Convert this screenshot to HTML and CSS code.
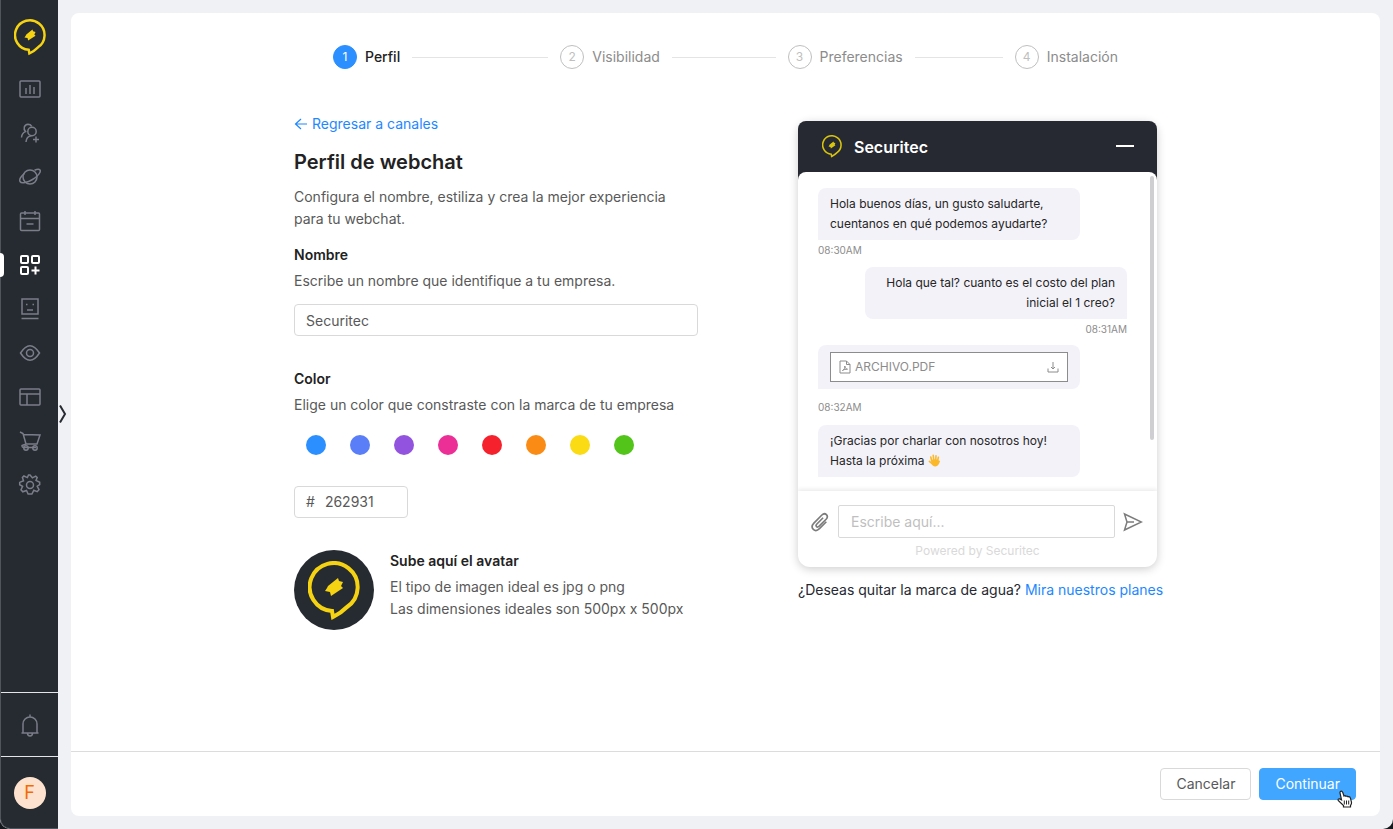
FILE: index.html
```html
<!DOCTYPE html>
<html lang="es">
<head>
<meta charset="utf-8">
<meta name="viewport" content="width=device-width, initial-scale=1">
<title>Perfil de webchat</title>
<link rel="stylesheet" href="styles.css">
</head>
<body>
<svg class="sprite" aria-hidden="true">
  <symbol id="logo" viewBox="-26 -26 52 60">
    <path d="M-2 24A24 24 0 1 1 13 20Q7 26 -1 30Z" fill="none" stroke="currentColor" stroke-width="4"/>
    <path d="M4 -9L5 -6L9 -5L7 -1L9 1L-3 9L-4 5L-9 4L-7 1L-6 -1Z" fill="currentColor"/>
  </symbol>
</svg>
<div class="app">
  <aside class="sidebar">
    <a class="brand" href="#" aria-label="Inicio"><svg><use href="#logo"/></svg></a>
    <nav class="nav" aria-label="Principal">
      <a href="#" aria-label="Reportes"><svg viewBox="0 0 24 24"><rect x="2" y="4" width="20" height="16" rx="1"/><path d="M8 11v6M12 8v9M16 10v7"/></svg></a>
      <a href="#" aria-label="Contactos"><svg viewBox="0 0 24 24"><circle cx="14" cy="10.500" r="4.200"/><path d="M8 21c.3-4 2.500-6 5.500-6.300M3.500 16.500c.2-3 1.500-5 4-5.900C5 8 6 3.500 10 3.200c2 0 3 .8 3.800 2.100M15 18.500h6M18 15.500v6"/></svg></a>
      <a href="#" aria-label="Explorar"><svg viewBox="0 0 24 24"><circle cx="12" cy="12" r="7"/><path d="M6.500 8.500C3 11 1 14.500 2 16.500c1.500 2.500 7.500 1 12.500-2s9-7.500 7.500-9.500c-.8-1-3-.8-5.500.2"/></svg></a>
      <a href="#" aria-label="Calendario"><svg viewBox="0 0 24 24"><rect x="2.500" y="4" width="19" height="17.500" rx="1"/><path d="M2.500 9.500h19M7 2v4M17 2v4M8.500 15h7"/></svg></a>
      <a class="active" href="#" aria-label="Canales" aria-current="page"><svg viewBox="0 0 24 24"><rect x="3" y="3" width="7" height="7" rx="1"/><rect x="14" y="3" width="7" height="7" rx="1"/><rect x="3" y="14" width="7" height="7" rx="1"/><path d="M17.500 13.500v8M13.500 17.500h8"/></svg></a>
      <a href="#" aria-label="Bots"><svg viewBox="0 0 24 24"><path d="M4 2h16v15H4zM3.500 21.500h17M9 13h6M8 7.500h1.500M14.500 7.500H16"/></svg></a>
      <a href="#" aria-label="Supervisión"><svg viewBox="0 0 24 24"><path d="M2.500 12Q12-2.500 21.500 12Q12 26.500 2.500 12z"/><circle cx="12" cy="12" r="3.500"/></svg></a>
      <a href="#" aria-label="Plantillas"><svg viewBox="0 0 24 24"><rect x="2" y="4" width="20" height="16" rx="1"/><path d="M2 9h20M9 9v11"/></svg></a>
      <a href="#" aria-label="Tienda"><svg viewBox="0 0 24 24"><path d="M2 3l3 1.500L8 15h11l3-9-16.500-.5M8 15l-4 1.500q0 2 2 2h12"/><circle cx="8" cy="19" r="2.200"/><circle cx="17" cy="19" r="2.200"/></svg></a>
      <a href="#" aria-label="Ajustes"><svg viewBox="0 0 24 24"><path d="M12 1.500l2.400 2.800 3.300-1.700 1.500 1.400-1.200 3 3.700 1.800v2.400l-2.500 1.500 1.800 3.500-1.800 2-3.400-1.400-1.900 3.700h-3.800l-1.600-3.500-3.700 1.300-1.800-2 1.600-3.500-2.900-1.600V8.900l3.800-1.600L4.400 4l1.500-1.500 3.500 1.600L10.500 1.500z" transform="translate(0 .5)"/><circle cx="12" cy="12" r="3.500"/></svg></a>
    </nav>
    <button class="bell" type="button" aria-label="Notificaciones"><svg viewBox="0 0 24 24"><path d="M3.500 20h17M5 20v-9a7 7 0 0 1 14 0v9M12 1.500V4M9.500 20a2.500 3 0 0 0 5 0"/></svg></button>
    <div class="account"><button class="user" type="button" aria-label="Mi cuenta">F</button></div>
    <button class="expand" type="button" aria-label="Expandir menú"><svg viewBox="0 0 8 20"><path d="M1 1.500L6 10L1 18.500"/></svg></button>
  </aside>

  <main class="card">
    <div class="page">
      <ol class="steps">
        <li class="current"><span class="num">1</span><span>Perfil</span></li>
        <li><span class="num">2</span><span>Visibilidad</span></li>
        <li><span class="num">3</span><span>Preferencias</span></li>
        <li><span class="num">4</span><span>Instalación</span></li>
      </ol>

      <div class="columns">
        <form class="form" id="perfil">
          <a class="back" href="#"><svg viewBox="0 0 14 14"><path d="M13 7H2M7 2L1.500 7L7 12"/></svg>Regresar a canales</a>
          <h1>Perfil de webchat</h1>
          <p class="intro">Configura el nombre, estiliza y crea la mejor experiencia para tu webchat.</p>

          <label class="title" for="nombre">Nombre</label>
          <p>Escribe un nombre que identifique a tu empresa.</p>
          <input class="field" id="nombre" type="text" value="Securitec">

          <h2 class="title color-title">Color</h2>
          <p>Elige un color que constraste con la marca de tu empresa</p>
          <div class="swatches" role="radiogroup" aria-label="Color">
            <input type="radio" name="color" class="blue" aria-label="Azul">
            <input type="radio" name="color" class="indigo" aria-label="Índigo">
            <input type="radio" name="color" class="purple" aria-label="Morado">
            <input type="radio" name="color" class="pink" aria-label="Rosa">
            <input type="radio" name="color" class="red" aria-label="Rojo">
            <input type="radio" name="color" class="orange" aria-label="Naranja">
            <input type="radio" name="color" class="yellow" aria-label="Amarillo">
            <input type="radio" name="color" class="green" aria-label="Verde">
          </div>
          <div class="field hex"><label for="hex">#</label><input id="hex" type="text" value="262931"></div>

          <div class="upload">
            <button class="avatar" type="button" aria-label="Subir avatar"><svg><use href="#logo"/></svg></button>
            <div>
              <h2 class="title">Sube aquí el avatar</h2>
              <p>El tipo de imagen ideal es jpg o png</p>
              <p>Las dimensiones ideales son 500px x 500px</p>
            </div>
          </div>
        </form>

        <section class="preview" aria-label="Vista previa">
          <div class="chat">
            <header class="chat-head">
              <svg class="chat-logo"><use href="#logo"/></svg>
              <span>Securitec</span>
              <button type="button" aria-label="Minimizar"><svg viewBox="0 0 18 18"><path d="M0 8H18"/></svg></button>
            </header>
            <div class="chat-body">
              <div class="messages">
                <div class="bubble">Hola buenos días, un gusto saludarte, cuentanos en qué podemos ayudarte?</div>
                <time>08:30AM</time>
                <div class="bubble mine">Hola que tal? cuanto es el costo del plan inicial el 1 creo?</div>
                <time class="mine-time">08:31AM</time>
                <div class="bubble attachment">
                  <a class="file" href="#"><svg viewBox="0 0 12 14"><path d="M1 1h6.500L11 4.500V13H1zM7.500 1v3.500H11M3.500 10.500c2-1 2.500-3 2.300-4.500.3 2 1.200 3 2.700 3.200-2-.1-3.500.3-5 1.300z"/></svg><span>ARCHIVO.PDF</span><svg viewBox="0 0 12 14"><path d="M6 2v7M4 7l2 2 2-2M1 8.500V12h10V8.500"/></svg></a>
                </div>
                <time class="late">08:32AM</time>
                <div class="bubble">¡Gracias por charlar con nosotros hoy! Hasta la próxima <svg class="hand" viewBox="0 0 14 14"><path d="M4 7.500L3 3.200M6.200 6.500L5.600 1.500M8.400 6.500L8.600 1.800M10.300 7.500L11.200 3.500M4.500 10.500L1.500 8" stroke="#fbb829" stroke-width="1.700" stroke-linecap="round"/><path d="M3.500 6.500Q7 4.500 11 6.700L13 7.500Q11.500 13 8 13.500Q4.500 13.500 3.500 9.500z" fill="#fbb829"/></svg></div>
              </div>
              <span class="thumb"></span>
            </div>
            <div class="composer">
              <button type="button" aria-label="Adjuntar"><svg viewBox="0 0 18 18"><path d="M11.800 5.200L6 11c-1.400 1.600.4 3.300 2 2l6.500-6.500c2.800-3-.8-6.600-3.800-3.800L3.500 10c-4 4.300 1 9 5 5l6.200-6.200"/></svg></button>
              <input type="text" placeholder="Escribe aquí..." aria-label="Escribe aquí...">
              <button type="button" aria-label="Enviar"><svg class="send" viewBox="0 0 20 20"><path d="M1.500 2L18.500 10L1.500 18L4 10zM4 10H11"/></svg></button>
            </div>
            <p class="powered">Powered by Securitec</p>
          </div>
          <p class="plans">¿Deseas quitar la marca de agua? <a href="#">Mira nuestros planes</a></p>
        </section>
      </div>
    </div>

    <footer class="actions">
      <button class="btn" type="button">Cancelar</button>
      <button class="btn primary" type="submit" form="perfil">Continuar
        <svg class="cursor" viewBox="0 0 16 18" aria-hidden="true"><path d="M3 2q1.500-2 2.700.2L7 6q1.200-.8 2 .3 1.300-.6 2 .5 2-.5 2.500 1.500l1 4q.2 2-1 3.200V17H6.500v-1.500L1.200 10.500q-.6-2 1.600-1.600l1.700 1L3 3z" fill="#fff" stroke="#222" stroke-width="1.200"/><path d="M7.300 10.500v4M9.500 10.500v4M11.700 10.500v4" stroke="#222"/></svg>
      </button>
    </footer>
  </main>
</div>
</body>
</html>
```

FILE: styles.css
```css
* { box-sizing: border-box; }
body {
  margin: 0;
  background: #15181d;
  color: #595959;
  font: 14px/22px Inter, "Liberation Sans", sans-serif;
}
h1, h2, p, ol { margin: 0; padding: 0; }
button, input { font: inherit; color: inherit; }
button { padding: 0; border: 0; background: none; cursor: pointer; }
a { color: #1e88ff; text-decoration: none; }
svg { display: block; fill: none; stroke: currentColor; }
.sprite { position: absolute; width: 0; height: 0; }

.app {
  display: flex;
  min-height: 100vh;
  background: #f0f1f5;
  border-radius: 0 0 10px 10px;
  overflow: hidden;
}

/* Sidebar */
.sidebar {
  position: relative;
  display: flex;
  flex-direction: column;
  flex: none;
  width: 58px;
  background: #262b31;
  border-left: 1px solid #50545c;
  border-bottom: 1px solid #50545c;
  border-radius: 0 0 0 10px;
  color: #7b7e89;
}
.brand {
  display: flex;
  justify-content: center;
  padding: 19px 0 11px;
  color: #f5d313;
}
.brand svg { width: 32px; height: 37px; stroke: none; }
.nav { flex: 1; }
.nav a {
  position: relative;
  display: flex;
  align-items: center;
  justify-content: center;
  height: 44px;
  color: inherit;
}
.nav svg { width: 24px; height: 24px; stroke-width: 1.5; }
.nav .active { color: #fff; }
.nav .active svg { stroke-width: 2; }
.nav .active::before {
  content: "";
  position: absolute;
  left: -1px;
  width: 4px;
  height: 24px;
  border-radius: 0 4px 4px 0;
  background: #fff;
}
.bell {
  display: flex;
  align-items: center;
  justify-content: center;
  height: 64px;
  border-top: 1px solid #e5e6e8;
}
.bell svg { width: 24px; height: 24px; stroke-width: 1.5; }
.account {
  display: flex;
  align-items: center;
  justify-content: center;
  height: 72px;
  border-top: 1px solid #e5e6e8;
}
.user {
  width: 32px;
  height: 32px;
  border-radius: 50%;
  background: #fde3cf;
  color: #f56a00;
  font-size: 18px;
}
.expand {
  position: absolute;
  top: 50%;
  left: 58px;
  transform: translateY(-50%);
  color: #262b31;
}
.expand svg { width: 8px; height: 20px; stroke-width: 2; }

/* Main card */
.card {
  display: flex;
  flex-direction: column;
  flex: 1;
  min-width: 0;
  margin: 13px;
  background: #fff;
  border-radius: 8px;
}
.page { flex: 1; padding: 32px 24px 24px; }
.steps {
  display: flex;
  max-width: 785px;
  margin: 0 auto 44px;
  list-style: none;
  color: #8c8c8c;
}
.steps li { display: flex; align-items: center; flex: 1; gap: 8px; }
.steps li:last-child { flex: none; }
.steps li:not(:last-child)::after {
  content: "";
  flex: 1;
  height: 1px;
  margin: 0 12px 0 4px;
  background: #e4e4e4;
}
.num {
  display: flex;
  align-items: center;
  justify-content: center;
  width: 24px;
  height: 24px;
  border: 1px solid #bfbfbf;
  border-radius: 50%;
  color: #bfbfbf;
  font-size: 12px;
}
.current { color: #222; font-weight: 500; }
.current .num { border-color: #2b8fff; background: #2b8fff; color: #fff; font-weight: 400; }

.columns {
  display: grid;
  grid-template-columns: minmax(0, 404px) minmax(0, 359px);
  justify-content: center;
  gap: 100px;
}

/* Form */
.back { display: inline-flex; align-items: center; gap: 4px; }
.back svg { width: 14px; height: 14px; stroke-width: 1.2; }
h1 {
  margin: 11px 0 10px;
  color: #222;
  font-size: 20px;
  font-weight: 600;
  line-height: 28px;
}
.intro { margin-bottom: 14px; }
.title {
  display: block;
  margin-bottom: 4px;
  color: #222;
  font-size: 14px;
  font-weight: 600;
}
.field {
  width: 100%;
  height: 32px;
  margin-top: 12px;
  padding: 0 11px;
  border: 1px solid #d9d9d9;
  border-radius: 4px;
  background: #fff;
}
.color-title { margin-top: 32px; }
.swatches { display: flex; gap: 24px; padding: 19px 12px; }
.swatches input {
  appearance: none;
  width: 20px;
  height: 20px;
  margin: 0;
  border-radius: 50%;
}
.blue { background: #2b8fff; }
.indigo { background: #597ef7; }
.purple { background: #9254de; }
.pink { background: #eb2f96; }
.red { background: #f5222d; }
.orange { background: #fa8c16; }
.yellow { background: #fadb14; }
.green { background: #52c41a; }
.hex { display: flex; align-items: center; gap: 10px; width: 114px; }
.hex input { width: 100%; min-width: 0; padding: 0; border: 0; outline: 0; }
.upload { display: flex; gap: 16px; margin-top: 32px; }
.avatar {
  display: flex;
  justify-content: center;
  flex: none;
  width: 80px;
  height: 80px;
  padding-top: 11px;
  border-radius: 50%;
  background: #262b31;
  color: #f5d313;
}
.avatar svg { width: 52px; height: 60px; stroke: none; }

/* Chat preview */
.preview { padding-top: 8px; }
.chat {
  border-radius: 12px;
  background: #fff;
  box-shadow: 0 2px 10px rgba(0, 0, 0, .2);
}
.chat-head {
  display: flex;
  align-items: center;
  gap: 12px;
  height: 60px;
  padding: 0 23px 9px 24px;
  border-radius: 8px 8px 0 0;
  background: #262931;
  color: #fff;
  font-size: 16px;
  font-weight: 600;
}
.chat-head span { flex: 1; }
.chat-logo { width: 20px; height: 23px; stroke: none; color: #d9c40d; }
.chat-head button svg { width: 18px; height: 18px; stroke-width: 2; }
.chat-body {
  position: relative;
  margin-top: -9px;
  padding: 0 30px 14px 20px;
  border-radius: 8px 8px 0 0;
  background: #fff;
}
.messages {
  display: flex;
  flex-direction: column;
  align-items: flex-start;
  height: 305px;
  padding-top: 16px;
  overflow: hidden;
}
.bubble {
  flex: none;
  width: 262px;
  padding: 6px 12px;
  border-radius: 8px 8px 8px 0;
  background: #f3f2f9;
  color: #262626;
  font-size: 12px;
  line-height: 20px;
}
.mine { align-self: flex-end; border-radius: 8px 8px 0 8px; text-align: right; }
.messages time {
  height: 30px;
  color: #8c8c8c;
  font-size: 10px;
  line-height: 20px;
}
.messages .mine-time { align-self: flex-end; }
.messages .late { height: 38px; line-height: 36px; }
.file {
  display: flex;
  align-items: center;
  gap: 4px;
  height: 30px;
  margin: 1px 0;
  padding: 0 8px;
  border: 1px solid #8c8c8c;
  background: #fff;
  color: #8c8c8c;
}
.file span { flex: 1; }
.file svg { width: 12px; height: 14px; }
.hand { display: inline-block; width: 13px; height: 13px; stroke: none; vertical-align: -2px; }
.thumb {
  position: absolute;
  top: 4px;
  right: 3px;
  width: 4px;
  height: 264px;
  border-radius: 2px;
  background: #cfcfd1;
}
.composer {
  display: flex;
  align-items: center;
  gap: 8px;
  padding: 14px 14px 0 12px;
  box-shadow: 0 -2px 4px rgba(0, 0, 0, .08);
  clip-path: inset(-5px 0 0 0);
  color: #7c7c7c;
}
.composer input {
  flex: 1;
  min-width: 0;
  height: 33px;
  padding: 0 12px;
  border: 1px solid #d9d9d9;
  border-radius: 2px;
}
.composer input::placeholder { color: #bfbfbf; opacity: 1; }
.composer button svg { width: 20px; height: 20px; stroke-width: 1.5; }
.powered {
  padding: 2px 0 5px;
  color: #d9d9d9;
  font-size: 12px;
  text-align: center;
}
.plans { margin-top: 12px; color: #262931; text-align: center; white-space: nowrap; }

/* Footer */
.actions {
  display: flex;
  justify-content: flex-end;
  gap: 8px;
  padding: 16px 24px;
  border-top: 1px solid #dcdcdc;
}
.btn {
  position: relative;
  height: 32px;
  padding: 0 15px;
  border: 1px solid #d9d9d9;
  border-radius: 4px;
  background: #fff;
}
.primary { border-color: #40a6ff; background: #40a6ff; color: #fff; }
.cursor { position: absolute; right: 2px; bottom: -9px; width: 16px; height: 18px; }
```
